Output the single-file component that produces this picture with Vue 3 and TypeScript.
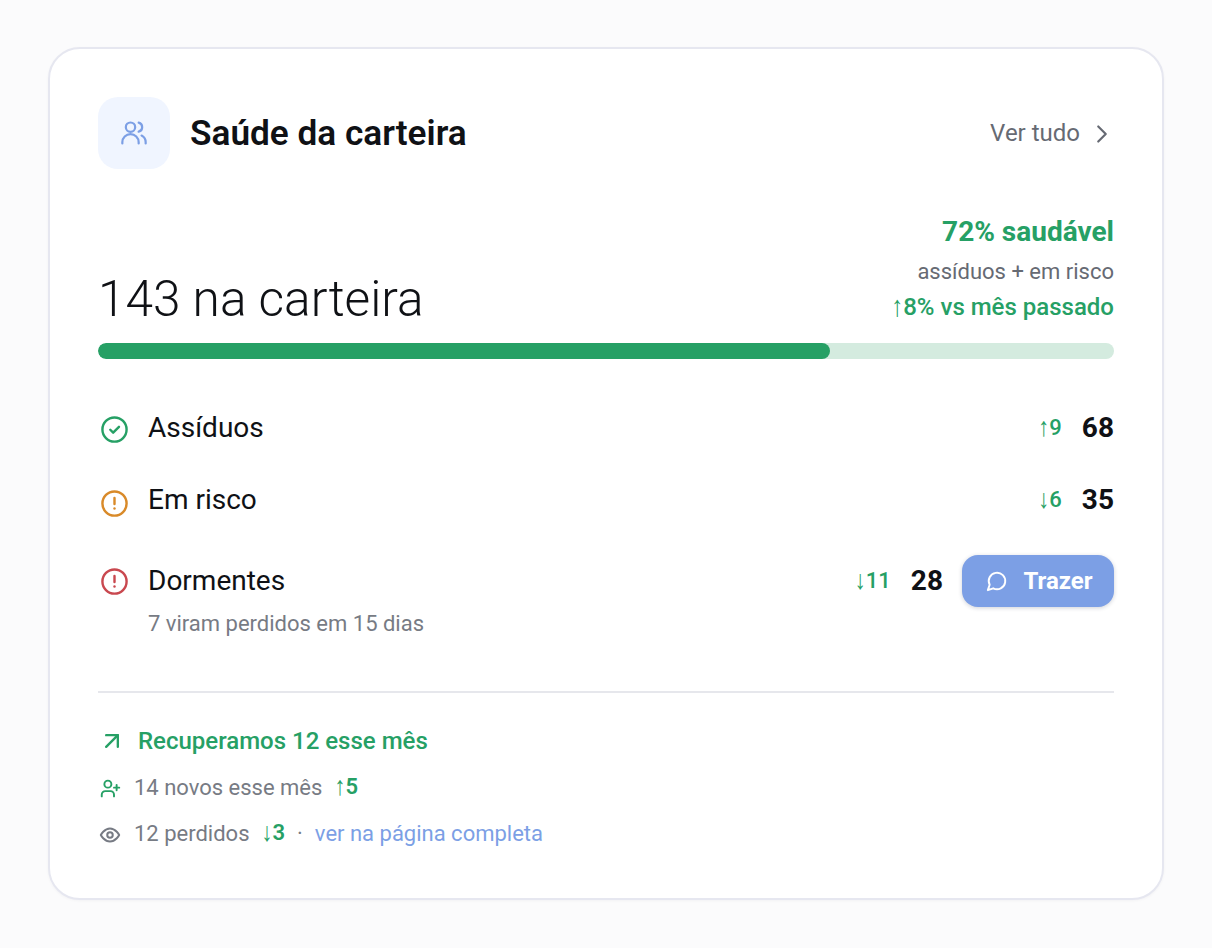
<template>
  <div class="page">
    <section class="card">
      <header class="head">
        <div class="head-left">
          <div class="badge">
            <svg width="28" height="28" viewBox="0 0 24 24" fill="none" stroke="currentColor" stroke-width="1.9" stroke-linecap="round" stroke-linejoin="round">
              <circle cx="9" cy="7" r="4" />
              <path d="M2 21v-1a7 7 0 0 1 14 0v1" />
              <path d="M16 3.13a4 4 0 0 1 0 7.75" />
              <path d="M22 21v-1a6.5 6.5 0 0 0-3.5-5.8" />
            </svg>
          </div>
          <h2 class="title">Saúde da carteira</h2>
        </div>
        <a class="see-all">
          <span>Ver tudo</span>
          <svg width="30" height="30" viewBox="0 0 24 24" fill="none" stroke="currentColor" stroke-width="1.75" stroke-linecap="round" stroke-linejoin="round"><path d="m9 18 6-6-6-6" /></svg>
        </a>
      </header>

      <div class="summary">
        <div class="total">143 na carteira</div>
        <div class="health">
          <div class="health-pct">72% saudável</div>
          <div class="health-sub">assíduos + em risco</div>
          <div class="health-trend"><span class="arrow">↑</span>8% vs mês passado</div>
        </div>
      </div>

      <div class="bar"><div class="bar-fill" :style="{ width: healthy + '%' }" /></div>

      <div class="rows">
        <div v-for="row in rows" :key="row.label" class="row" :class="row.cls">
          <div class="row-main">
            <svg class="row-icon" :style="{ color: row.color }" width="29" height="29" viewBox="0 0 24 24" fill="none" stroke="currentColor" stroke-width="2" stroke-linecap="round" stroke-linejoin="round">
              <circle cx="12" cy="12" r="10" />
              <path v-if="row.cls === 'ok'" d="m8.5 12.2 2.4 2.4 4.8-4.8" />
              <template v-else>
                <path d="M12 7.5v5" />
                <path d="M12 16.2h.01" />
              </template>
            </svg>
            <span class="row-label">{{ row.label }}</span>
            <div class="row-right">
              <span class="delta"><span class="arrow">{{ row.arrow }}</span>{{ row.delta }}</span>
              <span class="count">{{ row.count }}</span>
              <button v-if="row.cls === 'bad'" class="cta">
                <svg width="22" height="22" viewBox="0 0 24 24" fill="none" stroke="currentColor" stroke-width="2.1" stroke-linecap="round" stroke-linejoin="round"><path d="M7.9 20A9 9 0 1 0 4 16.1L2 22Z" /></svg>
                <span>Trazer</span>
              </button>
            </div>
          </div>
          <div v-if="row.note" class="row-note">{{ row.note }}</div>
        </div>
      </div>

      <footer class="foot">
        <div class="foot-top">
          <svg width="28" height="28" viewBox="0 0 24 24" fill="none" stroke="currentColor" stroke-width="2" stroke-linecap="round" stroke-linejoin="round"><path d="M7 7h10v10" /><path d="M7 17 17 7" /></svg>
          <span>Recuperamos 12 esse mês</span>
        </div>
        <div class="foot-line">
          <svg class="user-icon green" width="21" height="21" viewBox="0 0 24 24" fill="none" stroke="currentColor" stroke-width="2.2" stroke-linecap="round" stroke-linejoin="round"><path d="M16 21v-2a4 4 0 0 0-4-4H6a4 4 0 0 0-4 4v2" /><circle cx="9" cy="7" r="4" /><path d="M19 8v6" /><path d="M22 11h-6" /></svg>
          <span>14 novos esse mês</span>
          <b class="trend"><span class="arrow">↑</span>5</b>
        </div>
        <div class="foot-line">
          <svg class="eye-icon grey" width="22" height="22" viewBox="0 0 24 24" fill="none" stroke="currentColor" stroke-width="2.2" stroke-linecap="round" stroke-linejoin="round"><path d="M2 12s3.6-7 10-7 10 7 10 7-3.6 7-10 7-10-7-10-7Z" /><circle cx="12" cy="12" r="3" /></svg>
          <span>12 perdidos</span>
          <b class="trend"><span class="arrow">↓</span>3</b>
          <span class="dot">·</span>
          <a class="link">ver na página completa</a>
        </div>
      </footer>
    </section>
  </div>
</template>

<script setup lang="ts">
type Row = {
  label: string
  arrow: string
  delta: number
  count: number
  cls: 'ok' | 'warn' | 'bad'
  color: string
  note?: string
}

const healthy = 72

const rows: Row[] = [
  { label: 'Assíduos', arrow: '↑', delta: 9, count: 68, cls: 'ok', color: '#26a065' },
  { label: 'Em risco', arrow: '↓', delta: 6, count: 35, cls: 'warn', color: '#d98a29' },
  { label: 'Dormentes', arrow: '↓', delta: 11, count: 28, cls: 'bad', color: '#c9484f', note: '7 viram perdidos em 15 dias' },
]
</script>

<style>
body {
  background: #fbfbfc;
}
</style>

<style scoped>
.page {
  padding: 47px 48px;
  font-family: Roboto, "Liberation Sans", sans-serif;
  color: #0f1115;
}
.card {
  height: 853px;
  box-sizing: border-box;
  background: #fff;
  border: 2px solid #e6e7f0;
  border-radius: 32px;
  padding: 48px 48px 0;
  box-shadow: 0 1px 3px rgba(20, 20, 40, 0.04);
}
/* the glyph in the installed fonts is shorter than the reference one */
.arrow {
  display: inline-block;
  font-family: "Liberation Sans", sans-serif;
  font-weight: 400;
  transform: translateY(-1px) scaleY(1.22);
}
.head {
  display: flex;
  align-items: center;
  justify-content: space-between;
}
.head-left {
  display: flex;
  align-items: center;
  gap: 20px;
}
.badge {
  width: 72px;
  height: 72px;
  border-radius: 20px;
  background: #f0f5ff;
  color: #7c9fe5;
  display: flex;
  align-items: center;
  justify-content: center;
}
.title {
  margin: 0;
  font-size: 35.2px;
  font-weight: 600;
}
.see-all {
  display: flex;
  align-items: center;
  gap: 7px;
  font-size: 24px;
  color: #666a73;
}
.see-all svg {
  margin: 2px -3px 0 0;
}
.summary {
  margin-top: 43px;
  display: flex;
  align-items: flex-end;
  justify-content: space-between;
}
.total {
  font-size: 49.6px;
  font-weight: 300;
  line-height: 52px;
}
.health {
  text-align: right;
}
.health-pct {
  font-size: 28px;
  font-weight: 700;
  color: #26a065;
  line-height: 40px;
}
.health-sub {
  margin-top: 3px;
  font-size: 22px;
  color: #666a73;
  line-height: 34px;
}
.health-trend {
  font-size: 24px;
  font-weight: 500;
  color: #26a065;
  line-height: 36px;
}
.bar {
  margin-top: 18px;
  height: 16px;
  border-radius: 8px;
  background: #d4ebdf;
  overflow: hidden;
}
.bar-fill {
  height: 100%;
  border-radius: 8px;
  background: #26a065;
}
.rows {
  margin-top: 32px;
  display: flex;
  flex-direction: column;
}
.row-main {
  display: flex;
  align-items: center;
  min-height: 72px;
}
.row.bad .row-main {
  min-height: 52px;
  margin-top: 20px;
}
.row-icon {
  margin: 0 19.5px 0 1.5px;
  flex: none;
}
.row.ok .row-icon {
  margin-top: 4px;
}
.row.warn .row-icon {
  margin-top: 8px;
}
.row-label {
  font-size: 28px;
}
.row-right {
  margin-left: auto;
  display: flex;
  align-items: center;
  gap: 20px;
}
.delta {
  font-size: 22px;
  font-weight: 500;
  color: #26a065;
  margin-top: 2px;
}
.count {
  font-size: 28px;
  font-weight: 700;
}
.row.bad .row-label,
.row.bad .count {
  margin-top: -2px;
}
.row.bad .count {
  margin-right: -1px;
}
.row.bad .delta {
  margin-top: 0;
}
.cta {
  height: 52px;
  width: 152px;
  border: 0;
  border-radius: 16px;
  padding: 0 0 0 2px;
  background: #7c9fe5;
  color: #fff;
  font-family: inherit;
  font-size: 24px;
  font-weight: 700;
  display: flex;
  align-items: center;
  justify-content: center;
  gap: 15px;
  box-shadow: 0 1px 4px rgba(20, 30, 60, 0.2);
}
.cta svg {
  margin-left: 1px;
}
.row-note {
  margin-left: 50px;
  font-size: 22px;
  color: #777b84;
  margin-top: 4px;
}
.foot {
  margin-top: 55px;
  padding-top: 30px;
  border-top: 2px solid #e6e7ec;
}
.foot-top {
  display: flex;
  align-items: center;
  gap: 12px;
  font-size: 24px;
  font-weight: 500;
  color: #26a065;
  height: 36px;
  margin-bottom: 5px;
}
.foot-line {
  display: flex;
  align-items: center;
  gap: 12px;
  font-size: 22px;
  color: #777b84;
  height: 46px;
}
.user-icon {
  margin: 3px 1.5px 0;
}
.eye-icon {
  margin: 3px 1px 0;
}
.green {
  color: #26a065;
}
.grey {
  color: #777b84;
}
.trend {
  color: #26a065;
  font-weight: 600;
}
.link {
  color: #7c9fe5;
}
</style>
